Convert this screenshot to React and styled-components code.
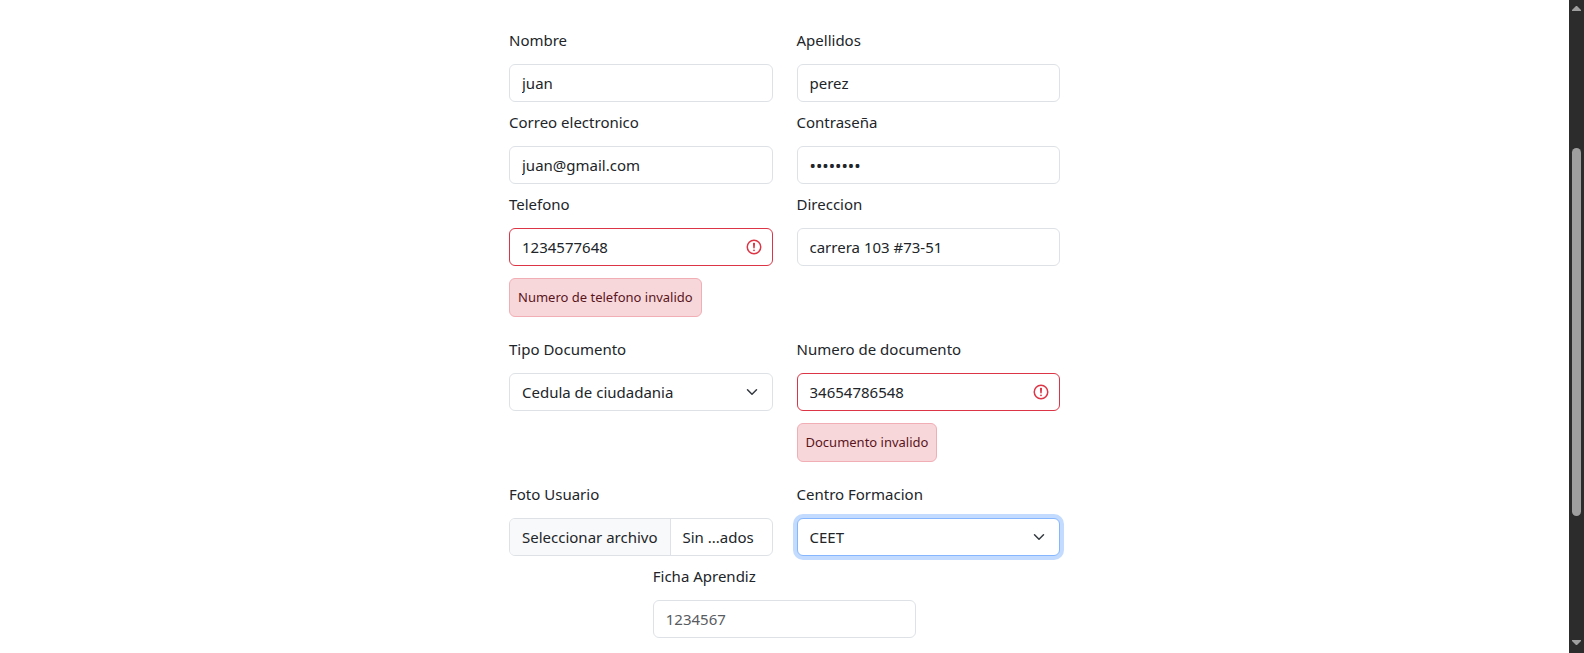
import React from "react";
import styled, { createGlobalStyle, css } from "styled-components";

const GlobalStyle = createGlobalStyle`
  *, *::before, *::after { box-sizing: border-box; }
  body {
    margin: 0;
    background: #fff;
    color: #212529;
    font-family: "Segoe UI", "Noto Sans", "Liberation Sans", sans-serif;
    font-size: 15px;
    line-height: 24px;
  }
`;

const Shell = styled.div`
  display: flex;
  min-height: 100vh;
`;

const Page = styled.main`
  flex: 1;
  min-width: 0;
  padding: 20px 12px 12px;
`;

const Form = styled.form`
  display: grid;
  grid-template-columns: repeat(4, minmax(0, 1fr));
  column-gap: 24px;
  max-width: 551px;
  margin: 0 auto;
`;

const Field = styled.div`
  grid-column: ${(p) => (p.$centered ? "2 / span 2" : "span 2")};
  display: flex;
  flex-direction: column;
  align-items: flex-start;
  padding-top: 8px;
`;

const Label = styled.label`
  margin-bottom: 12px;
`;

const ControlWrap = styled.div`
  position: relative;
  width: 100%;
`;

const controlStyle = css`
  display: block;
  width: 100%;
  height: 38px;
  margin: 0;
  border: 1px solid #dee2e6;
  border-radius: 6px;
  background: #fff;
  color: inherit;
  font: inherit;
`;

const TextInput = styled.input`
  ${controlStyle}
  padding: 6px 12px;
  outline: 0;
  &::placeholder { color: #595c5f; opacity: 1; }
  &[type="password"] { font-size: 17px; }
  &[aria-invalid="true"] {
    padding-right: 36px;
    border-color: #dc3545;
  }
`;

const Select = styled.select`
  ${controlStyle}
  appearance: none;
  padding: 6px 36px 6px 12px;
  outline: 0;
  ${(p) =>
    p.$active &&
    css`
      border-color: #86b7fe;
      box-shadow: 0 0 0 4px rgba(13, 110, 253, 0.25);
    `}
`;

const ControlIcon = styled.svg`
  position: absolute;
  top: 0;
  bottom: 0;
  right: ${(p) => p.$right}px;
  margin: auto 0;
  pointer-events: none;
`;

const FileBox = styled.label`
  ${controlStyle}
  display: flex;
  overflow: hidden;
  cursor: pointer;
`;

const HiddenFile = styled.input`
  position: absolute;
  width: 1px;
  height: 1px;
  opacity: 0;
`;

const FileButton = styled.span`
  flex: none;
  padding: 6px 12px;
  border-right: 1px solid #dee2e6;
  background: #f8f9fa;
`;

const FileName = styled.span`
  padding: 6px 12px;
  white-space: nowrap;
`;

const Alert = styled.div`
  margin: 12px 0;
  padding: 8px;
  border: 1px solid #f1aeb5;
  border-radius: 6px;
  background: #f8d7da;
  color: #58151c;
  font-size: 13px;
  line-height: 21px;
`;

const ScrollRail = styled.div`
  flex: none;
  display: flex;
  flex-direction: column;
  align-items: center;
  width: 15px;
  padding: 6px 0 8px;
  background: #2c2c2c;
`;

const RailGap = styled.div`
  flex: ${(p) => p.$share};
`;

const Thumb = styled.div`
  flex: 368;
  width: 9px;
  border-radius: 5px;
  background: #9f9f9f;
`;

function InvalidIcon() {
  return (
    <ControlIcon $right={10} width="18" height="18" viewBox="0 0 12 12" fill="none" stroke="#dc3545" aria-hidden="true">
      <circle cx="6" cy="6" r="4.5" />
      <path strokeLinejoin="round" d="M5.8 3.6h.4L6 6.5z" />
      <circle cx="6" cy="8.2" r=".6" fill="#dc3545" stroke="none" />
    </ControlIcon>
  );
}

function Chevron() {
  return (
    <ControlIcon $right={13} width="16" height="12" viewBox="0 0 16 16" fill="none" aria-hidden="true">
      <path stroke="#343a40" strokeLinecap="round" strokeLinejoin="round" strokeWidth="2" d="m2 5 6 6 6-6" />
    </ControlIcon>
  );
}

function Arrow({ d }) {
  return (
    <svg width="9" height="5" viewBox="0 0 9 5" fill="#9f9f9f" aria-hidden="true">
      <path d={d} />
    </svg>
  );
}

function InputField({ id, label, error, centered, ...rest }) {
  return (
    <Field $centered={centered}>
      <Label htmlFor={id}>{label}</Label>
      <ControlWrap>
        <TextInput
          id={id}
          aria-invalid={error ? "true" : undefined}
          aria-describedby={error ? `${id}-error` : undefined}
          {...rest}
        />
        {error && <InvalidIcon />}
      </ControlWrap>
      {error && <Alert id={`${id}-error`}>{error}</Alert>}
    </Field>
  );
}

function SelectField({ id, label, options, active }) {
  return (
    <Field>
      <Label htmlFor={id}>{label}</Label>
      <ControlWrap>
        <Select id={id} $active={active}>
          {options.map((option) => (
            <option key={option}>{option}</option>
          ))}
        </Select>
        <Chevron />
      </ControlWrap>
    </Field>
  );
}

export default function App() {
  return (
    <>
      <GlobalStyle />
      <Shell>
        <Page>
          <Form>
            <InputField id="nombre" label="Nombre" defaultValue="juan" />
            <InputField id="apellidos" label="Apellidos" defaultValue="perez" />
            <InputField id="correo" label="Correo electronico" type="email" defaultValue="juan@gmail.com" />
            <InputField id="clave" label="Contraseña" type="password" defaultValue="12345678" />
            <InputField id="telefono" label="Telefono" defaultValue="1234577648" error="Numero de telefono invalido" />
            <InputField id="direccion" label="Direccion" defaultValue="carrera 103 #73-51" />
            <SelectField id="tipo" label="Tipo Documento" options={["Cedula de ciudadania"]} />
            <InputField id="documento" label="Numero de documento" defaultValue="34654786548" error="Documento invalido" />
            <Field>
              <Label htmlFor="foto">Foto Usuario</Label>
              <ControlWrap>
                <HiddenFile id="foto" type="file" />
                <FileBox htmlFor="foto">
                  <FileButton>Seleccionar archivo</FileButton>
                  <FileName>Sin ...ados</FileName>
                </FileBox>
              </ControlWrap>
            </Field>
            <SelectField id="centro" label="Centro Formacion" options={["CEET"]} active />
            <InputField id="ficha" label="Ficha Aprendiz" placeholder="1234567" centered />
          </Form>
        </Page>
        <ScrollRail aria-hidden="true">
          <Arrow d="M4 0h1l4 4v1H0V4z" />
          <RailGap $share={137} />
          <Thumb />
          <RailGap $share={124} />
          <Arrow d="M0 0h9v1L5 5H4L0 1z" />
        </ScrollRail>
      </Shell>
    </>
  );
}
